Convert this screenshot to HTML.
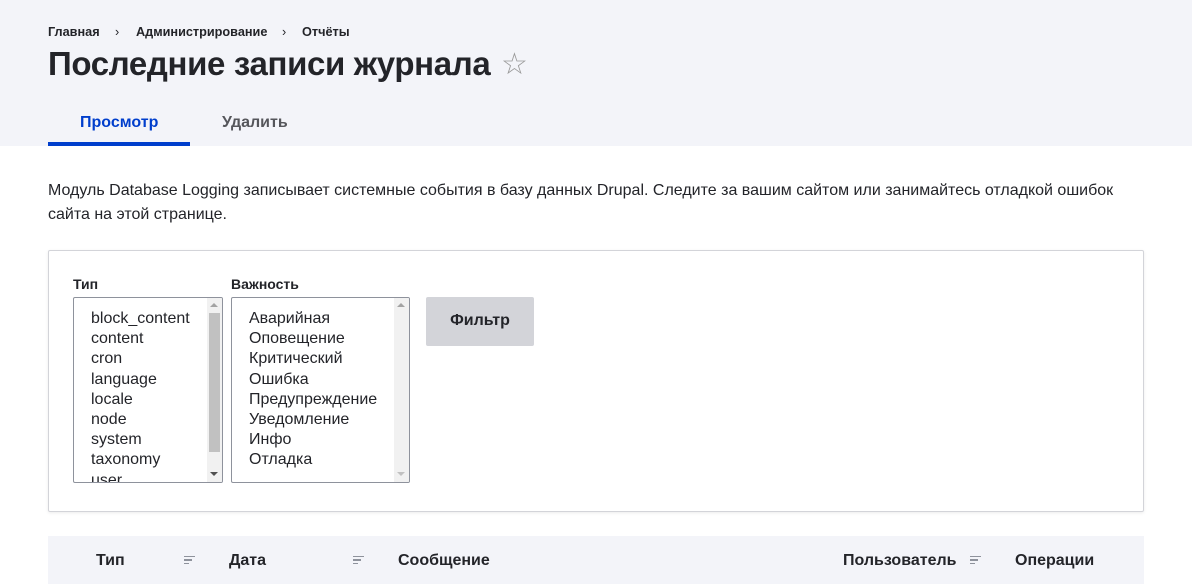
<!DOCTYPE html>
<html><head><meta charset="utf-8"><style>
*{box-sizing:border-box;margin:0;padding:0}
body{width:1192px;height:584px;overflow:hidden;background:#fff;font-family:"Liberation Sans",sans-serif;color:#232429;position:relative}
.hd{position:absolute;left:0;top:0;width:1192px;height:146px;background:#f3f4f9}
.a{position:absolute;white-space:nowrap}
.bc{font-size:12.7px;font-weight:bold;top:25px}
.sel{position:absolute;border:1px solid #8e929c;border-radius:2px;background:#fff;overflow:hidden}
.opt{position:absolute;left:17px;font-size:16px;line-height:20.2px;color:#232429}
.sb{position:absolute;right:0;top:0;width:15px;height:100%;background:#f1f1f1}
.th{font-size:16px;font-weight:bold;top:552px}
.ic{position:absolute;width:11px}
.ic i{display:block;height:1.3px;background:#8e929c;margin-bottom:2px}
</style></head><body>
<div class="hd"></div>
<div class="a bc" style="left:48px">Главная</div>
<div class="a bc" style="left:115px;font-weight:normal">›</div>
<div class="a bc" style="left:136px">Администрирование</div>
<div class="a bc" style="left:282px;font-weight:normal">›</div>
<div class="a bc" style="left:302px">Отчёты</div>
<div class="a" style="left:48px;top:45px;font-size:33px;font-weight:bold;letter-spacing:-0.35px">Последние записи журнала</div>
<div class="a" style="left:501px;top:47px;font-size:30px;color:#999">☆</div>
<div class="a" style="left:80px;top:114px;font-size:16px;font-weight:bold;color:#003ecc">Просмотр</div>
<div class="a" style="left:222px;top:114px;font-size:16px;font-weight:bold;color:#55565b">Удалить</div>
<div class="a" style="left:48px;top:142px;width:142px;height:4px;background:#003ecc"></div>
<div class="a" style="left:48px;top:179px;font-size:16px;line-height:24px;white-space:normal;width:1090px">Модуль Database Logging записывает системные события в базу данных Drupal. Следите за вашим сайтом или занимайтесь отладкой ошибок сайта на этой странице.</div>
<div class="a" style="left:48px;top:250px;width:1096px;height:262px;border:1px solid #d3d4d9;border-radius:2px;box-shadow:0 1px 3px rgba(0,0,0,.08)"></div>
<div class="a" style="left:73px;top:276px;font-size:14px;font-weight:bold">Тип</div>
<div class="a" style="left:231px;top:276px;font-size:14px;font-weight:bold">Важность</div>
<div class="sel" style="left:73px;top:297px;width:150px;height:186px">
<div class="opt" style="top:11px">block_content<br>content<br>cron<br>language<br>locale<br>node<br>system<br>taxonomy<br>user</div>
<div class="sb"><div style="position:absolute;left:2px;top:15px;width:11px;height:139px;background:#c1c1c1"></div>
<div style="position:absolute;left:3px;top:5px;border:4px solid transparent;border-bottom-color:#a3a3a3;border-top:0"></div>
<div style="position:absolute;left:3px;bottom:6px;border:4px solid transparent;border-top-color:#505050;border-bottom:0"></div></div>
</div>
<div class="sel" style="left:231px;top:297px;width:179px;height:186px">
<div class="opt" style="top:11px">Аварийная<br>Оповещение<br>Критический<br>Ошибка<br>Предупреждение<br>Уведомление<br>Инфо<br>Отладка</div>
<div class="sb">
<div style="position:absolute;left:3px;top:5px;border:4px solid transparent;border-bottom-color:#a3a3a3;border-top:0"></div>
<div style="position:absolute;left:3px;bottom:6px;border:4px solid transparent;border-top-color:#c1c1c1;border-bottom:0"></div></div>
</div>
<div class="a" style="left:426px;top:297px;width:108px;height:49px;background:#d3d4d9;border-radius:2px;font-size:16px;font-weight:bold;text-align:center;line-height:48px">Фильтр</div>
<div class="a" style="left:48px;top:536px;width:1096px;height:48px;background:#f3f4f9"></div>
<div class="a th" style="left:96px">Тип</div>
<div class="ic" style="left:184px;top:556px"><i style="width:11px"></i><i style="width:8px"></i><i style="width:5px"></i></div>
<div class="a th" style="left:229px">Дата</div>
<div class="ic" style="left:353px;top:556px"><i style="width:11px"></i><i style="width:8px"></i><i style="width:5px"></i></div>
<div class="a th" style="left:398px">Сообщение</div>
<div class="a th" style="left:843px">Пользователь</div>
<div class="ic" style="left:970px;top:556px"><i style="width:11px"></i><i style="width:8px"></i><i style="width:5px"></i></div>
<div class="a th" style="left:1015px">Операции</div>
</body></html>
